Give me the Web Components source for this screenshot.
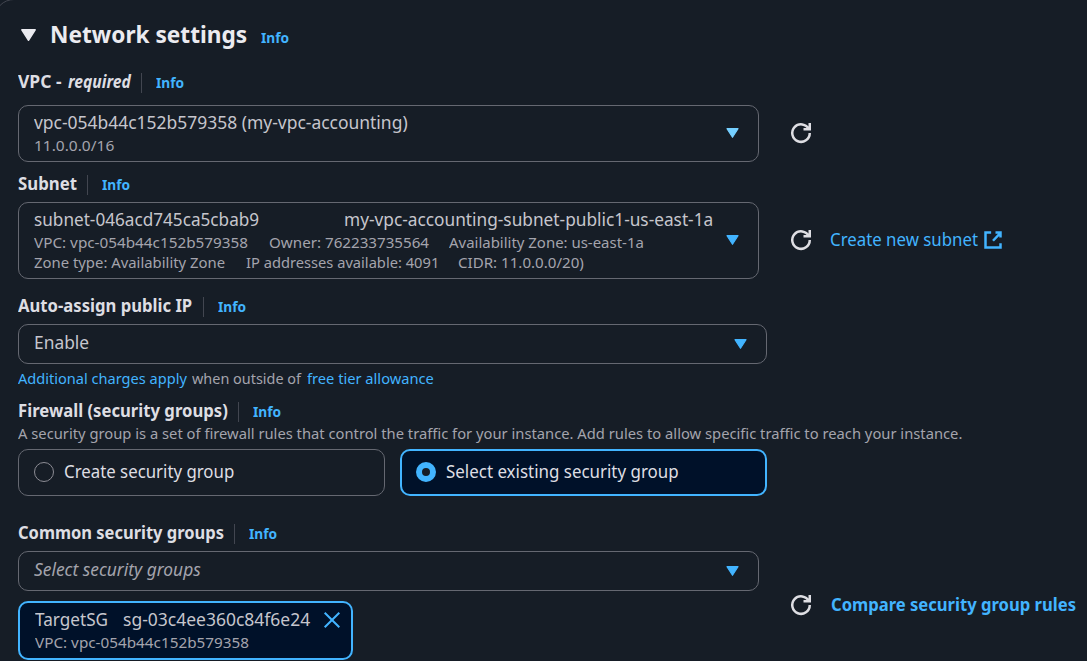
<!DOCTYPE html>
<html lang="en">
<head>
<meta charset="utf-8">
<title>Network settings</title>
<style>
html,body{margin:0;height:661px;overflow:hidden;background:#161d26}
body{width:1087px;font-family:"Noto Sans","Open Sans",sans-serif;color:#c6c6cd}
</style>
</head>
<body>
<network-settings></network-settings>
<script>
const ctx = document.createElement('canvas').getContext('2d');
const FAMILY = '"Noto Sans","Open Sans",sans-serif';
const make = (name, html, setup) => customElements.define(name, class extends HTMLElement {
  connectedCallback() {
    if (this.shadowRoot) return;
    this.attachShadow({mode: 'open'}).innerHTML = html;
    if (setup) setup(this, this.shadowRoot);
  }
});

/* A line of text whose glyphs span exactly the given width. */
make('fit-text', `<style>
:host{display:block;flex:none;white-space:nowrap;line-height:20px;height:20px}
:host([kind=title]){font-size:23.8px;font-weight:700;color:#ebebf0}
:host([kind=label]){font-size:17.4px;font-weight:700;color:#dedee3}
:host([kind=body]){font-size:17.4px}
:host([kind=option]){font-size:17.4px;color:#dedee3}
:host([kind=small]){font-size:14.4px;color:#a4a4ad}
:host([kind=info]){font-size:14.6px;font-weight:700;color:#42b4ff}
:host([kind=link]){font-size:17.4px;color:#42b4ff}
:host([kind=slink]){font-size:14.4px;color:#42b4ff}
:host([kind=blink]){font-size:17.4px;font-weight:700;color:#42b4ff}
:host([italic]){font-style:italic}
:host([muted]){color:#a4a4ad}
span{display:block;width:max-content;transform-origin:0 50%}
</style><span><slot></slot></span>`, (el, root) => {
  const w = +el.getAttribute('w');
  const cs = getComputedStyle(el);
  ctx.font = `${cs.fontStyle} ${cs.fontWeight} ${cs.fontSize} ${FAMILY}`;
  const m = ctx.measureText(el.textContent);
  const s = w / (m.actualBoundingBoxLeft + m.actualBoundingBoxRight);
  el.style.width = w + 'px';
  root.querySelector('span').style.transform =
    `translateX(${m.actualBoundingBoxLeft * s}px) scaleX(${s})`;
});

make('ui-icon', `<style>
:host{display:block;flex:none;color:#42b4ff}
svg{display:block;overflow:visible;fill:none;stroke:currentColor;stroke-width:2}
</style>`, (el, root) => {
  const icons = {
    caret: [13, 10, '0 0 13 10', '<path d="M1 .7h11L6.5 9.3z" fill="currentColor" stroke-width="1.2" stroke-linejoin="round"/>'],
    expand: [15, 12, '0 0 15 12', '<path d="M.8 .8h13.4L7.5 11.3z" fill="currentColor" stroke-width="1.4" stroke-linejoin="round"/>'],
    refresh: [20, 20, '0 0 16 16', '<path d="M10 5h5V0M15 8a7 7 0 1 1-.7-3"/>'],
    external: [20, 20, '0 0 16 16', '<path d="M10 2h4v4M8 8.600l6-6.300M14 10.500V14H2V2h4.500"/>'],
    close: [16, 16, '0 0 16 16', '<path d="M.7 .7l14.600 14.600M15.300 .7L.7 15.300"/>']
  };
  const [w, h, box, body] = icons[el.getAttribute('name')];
  root.innerHTML += `<svg width="${w}" height="${h}" viewBox="${box}">${body}</svg>`;
});

make('field-label', `<style>
:host{display:flex;height:20px;padding-left:18.300px}
.l{display:flex;gap:5.300px;margin-top:-2.300px;height:20px}
.i{border-left:1px solid #424650;padding-left:14px;height:20px;margin-left:10.300px}
.i fit-text{margin-top:-1.300px}
</style><div class="l"><slot></slot></div><div class="i"><fit-text kind="info" w="28">Info</fit-text></div>`);

make('select-box', `<style>
:host{display:flex;box-sizing:border-box;width:741px;height:40px;margin-left:18px;border:1px solid #656871;border-radius:10px;
align-items:center;justify-content:space-between;padding:0 19px 0 15.300px}
:host([wide]){width:749px}
:host([size=two]){height:57px}
:host([size=three]){height:77px}
.c{display:flex;flex-direction:column}
:host([size=two]) .c{gap:4px;margin-top:0}
ui-icon{margin-top:-1px}
:host([hot]) ui-icon{color:#75cfff}
</style><div class="c"><slot></slot></div><ui-icon name="caret"></ui-icon>`);

make('text-row', `<style>:host{display:flex}</style><slot></slot>`);

make('radio-tile', `<style>
:host{display:flex;box-sizing:border-box;width:367px;height:47px;border:1px solid #656871;border-radius:10px;align-items:center;padding-left:15px;gap:10.500px}
:host([checked]){border:2px solid #42b4ff;background:#001129;padding-left:14px;gap:10px}
i{box-sizing:border-box;width:20px;height:20px;border:1px solid #8c8c94;border-radius:50%;margin-top:-1px}
:host([checked]) i{border:6px solid #42b4ff;background:#161d26}
::slotted(fit-text){margin-top:-3px}
</style><i></i><slot></slot>`);

make('token-box', `<style>
:host{display:flex;box-sizing:border-box;width:335px;height:59px;margin-left:18px;border:2px solid #42b4ff;border-radius:10px;background:#001129;padding:6px 11px 0 15.300px;justify-content:space-between}
.c{display:flex;flex-direction:column;gap:4px}
ui-icon{margin-top:2.500px}
</style><div class="c"><slot></slot></div><ui-icon name="close"></ui-icon>`);

make('network-settings', `<style>
:host{display:block;width:1087px;height:661px;overflow:hidden}
.card{box-sizing:border-box;width:1120px;height:700px;margin:-1px 0 0 -6px;border:1px solid #424650;border-radius:20px;padding-left:5px}
header{display:flex;height:73px;padding-left:21px}
header ui-icon{color:#ebebf0;margin:28.500px 16px 0 0}
header .t{margin:23.500px 14.400px 0 0}
header .n{margin-top:26.700px}
.row{display:flex;align-items:center}
.row>.ref{color:#dedee3;margin:-1px 0 0 32px}
.row>.lnk{margin:-3px 0 0 20.300px}
.row>.ext{margin:-1px 0 0 5px}
.tiles{display:flex;gap:15px;margin:5px 0 0 18px}
.g1{margin-top:12px}.g2{margin-top:7px}
</style>
<div class="card">
<header><ui-icon name="expand"></ui-icon><fit-text class="t" kind="title" w="194.3">Network settings</fit-text><fit-text class="n" kind="info" w="28">Info</fit-text></header>

<field-label><fit-text kind="label" w="44">VPC -</fit-text><fit-text kind="label" italic w="63.400">required</fit-text></field-label>
<div class="row g1"><select-box size="two" hot>
<fit-text kind="body" w="373.4">vpc-054b44c152b579358 (my-vpc-accounting)</fit-text>
<fit-text kind="small" w="79" style="margin-left:1px">11.0.0.0/16</fit-text>
</select-box><ui-icon class="ref" name="refresh"></ui-icon></div>

<field-label style="margin-top:13px"><fit-text kind="label" w="58.4">Subnet</fit-text></field-label>
<div class="row g2"><select-box size="three">
<text-row style="margin-top:1px"><fit-text kind="body" w="225.2">subnet-046acd745ca5cbab9</fit-text><fit-text kind="body" w="367.5" style="margin-left:86px">my-vpc-accounting-subnet-public1-us-east-1a</fit-text></text-row>
<text-row style="margin-top:4px"><fit-text kind="small" w="213.7">VPC: vpc-054b44c152b579358</fit-text><fit-text kind="small" w="159.8" style="margin-left:20.700px">Owner: 762233735564</fit-text><fit-text kind="small" w="193.7" style="margin-left:20.500px">Availability Zone: us-east-1a</fit-text></text-row>
<text-row><fit-text kind="small" w="191">Zone type: Availability Zone</fit-text><fit-text kind="small" w="191" style="margin-left:20.300px">IP addresses available: 4091</fit-text><fit-text kind="small" w="125.5" style="margin-left:21.400px">CIDR: 11.0.0.0/20)</fit-text></text-row>
</select-box><ui-icon class="ref" name="refresh"></ui-icon><fit-text class="lnk" kind="link" w="146.7">Create new subnet</fit-text><ui-icon class="ext" name="external"></ui-icon></div>

<field-label style="margin-top:18px"><fit-text kind="label" w="174.4">Auto-assign public IP</fit-text></field-label>
<select-box wide class="g2"><fit-text kind="body" w="53.3" style="margin-left:.7px;margin-top:-4px">Enable</fit-text></select-box>
<div class="row" style="padding-left:18px;margin-top:4.500px"><fit-text kind="slink" w="169.5">Additional charges apply</fit-text><fit-text kind="small" w="110" style="margin-left:4.500px">when outside of</fit-text><fit-text kind="slink" w="126.7" style="margin-left:4.500px">free tier allowance</fit-text></div>

<field-label style="margin-top:13.500px"><fit-text kind="label" w="208.9" style="margin-left:.6px">Firewall (security groups)</fit-text></field-label>
<fit-text kind="small" w="943.5" style="margin:2px 0 0 18px">A security group is a set of firewall rules that control the traffic for your instance. Add rules to allow specific traffic to reach your instance.</fit-text>
<div class="tiles"><radio-tile><fit-text kind="option" w="168.6">Create security group</fit-text></radio-tile><radio-tile checked><fit-text kind="option" w="232">Select existing security group</fit-text></radio-tile></div>

<field-label style="margin-top:28px"><fit-text kind="label" w="205.300">Common security groups</fit-text></field-label>
<div class="row g2"><div>
<select-box><fit-text kind="body" italic muted w="167.200" style="margin-top:-4px">Select security groups</fit-text></select-box>
<token-box style="margin-top:10px"><text-row><fit-text kind="body" w="72.400">TargetSG</fit-text><fit-text kind="body" w="187.300" style="margin-left:15.300px">sg-03c4ee360c84f6e24</fit-text></text-row><fit-text kind="small" w="213.700">VPC: vpc-054b44c152b579358</fit-text></token-box>
</div><ui-icon class="ref" name="refresh"></ui-icon><fit-text class="lnk" kind="blink" w="244.300">Compare security group rules</fit-text></div>
</div>`);
</script>
</body>
</html>
